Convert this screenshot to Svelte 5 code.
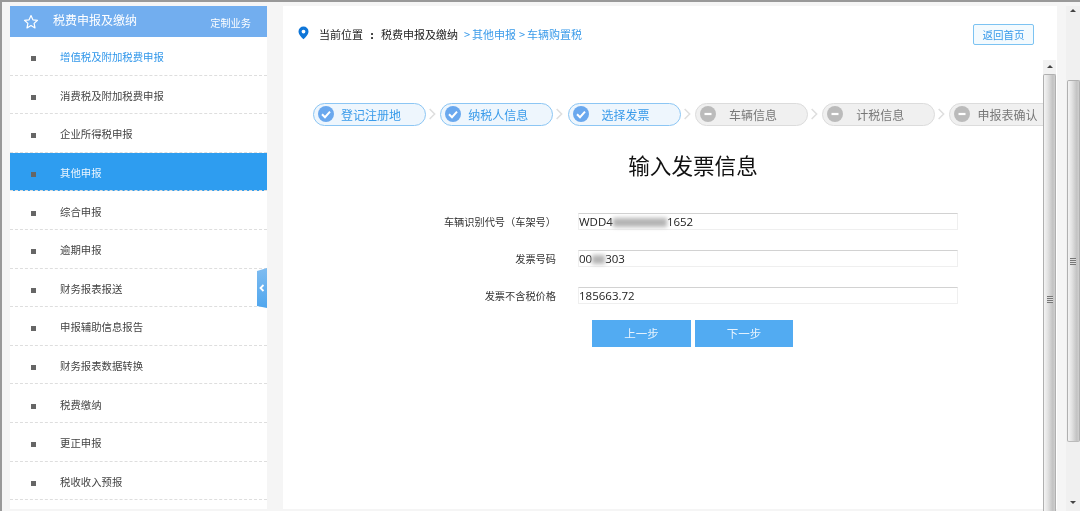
<script>
  const menu = ['增值税及附加税费申报','消费税及附加税费申报','企业所得税申报','其他申报','综合申报','逾期申报','财务报表报送','申报辅助信息报告','财务报表数据转换','税费缴纳','更正申报','税收收入预报'];
  const steps = [
    { label: '登记注册地', done: true },
    { label: '纳税人信息', done: true },
    { label: '选择发票', done: true },
    { label: '车辆信息', done: false },
    { label: '计税信息', done: false },
    { label: '申报表确认', done: false }
  ];
</script>

<div class="page">
  <aside class="sidebar">
    <div class="side-head">
      <svg class="star" width="16" height="16" viewBox="0 0 16 16"><path d="M8 1.600l1.900 4.200 4.600.5-3.400 3.100.9 4.500L8 11.600l-4 2.300.9-4.500L1.500 6.300l4.600-.5z" fill="none" stroke="#fff" stroke-width="1.200" stroke-linejoin="round"/></svg>
      <span class="side-title">税费申报及缴纳</span>
      <span class="side-custom">定制业务</span>
    </div>
    <ul class="menu">
      {#each menu as item, i}
        <li class:first={i === 0} class:active={i === 3}><i class="bullet"></i><span>{item}</span></li>
      {/each}
    </ul>
    <div class="toggle">
      <svg width="6" height="8" viewBox="0 0 6 8"><path d="M4.500 1L1.500 4l3 3" fill="none" stroke="#fff" stroke-width="1.800"/></svg>
    </div>
  </aside>

  <main class="main">
    <header class="crumbs">
      <svg class="pin" width="11" height="14" viewBox="0 0 11 14"><path fill-rule="evenodd" d="M5.500.5a5 5 0 0 1 5 5c0 3-3 5.800-5 7.800-2-2-5-4.800-5-7.800a5 5 0 0 1 5-5zm0 3.200a1.900 1.900 0 1 0 0 3.800 1.900 1.900 0 0 0 0-3.800z" fill="#0f76d8"/></svg>
      <span class="here">当前位置</span>
      <span class="colon">:</span>
      <span class="here">税费申报及缴纳</span>
      <span class="link first-link"><b>&gt;</b>其他申报</span>
      <span class="link"><b>&gt;</b>车辆购置税</span>
      <button class="home">返回首页</button>
    </header>

    <div class="body">
      <section class="content">
        <div class="steps">
          {#each steps as s, i}
            {#if i > 0}
              <svg class="chev" width="14" height="12" viewBox="0 0 14 12"><path d="M3.500 1l5 5-5 5" fill="none" stroke="#dedede" stroke-width="1.500"/></svg>
            {/if}
            <div class="step" class:done={s.done}>
              <span class="dot">
                {#if s.done}
                  <svg width="16" height="16" viewBox="0 0 16 16"><path d="M4 8.200l3 3 5-5.500" fill="none" stroke="#fff" stroke-width="2"/></svg>
                {:else}
                  <svg width="16" height="16" viewBox="0 0 16 16"><path d="M4.500 8h7" fill="none" stroke="#fff" stroke-width="2.200"/></svg>
                {/if}
              </span>
              <span class="step-label">{s.label}</span>
            </div>
          {/each}
        </div>

        <h1>输入发票信息</h1>

        <div class="form">
          <div class="row">
            <span class="label">车辆识别代号（车架号）</span>
            <div class="field">WDD4<i class="mask vin"></i>1652</div>
          </div>
          <div class="row">
            <span class="label">发票号码</span>
            <div class="field">00<i class="mask num"></i>303</div>
          </div>
          <div class="row">
            <span class="label">发票不含税价格</span>
            <div class="field">185663.72</div>
          </div>
        </div>

        <div class="actions">
          <button>上一步</button>
          <button>下一步</button>
        </div>
      </section>

      <div class="bar inner">
        <span class="arrow up"></span>
        <div class="thumb"><i class="grip"></i></div>
      </div>
    </div>
  </main>

  <div class="bar outer">
    <span class="arrow up"></span>
    <div class="thumb"><i class="grip"></i></div>
    <span class="arrow down"></span>
  </div>
</div>

<style>
  :global(body) {
    margin: 0;
    background: #f5f5f5;
  }
  .page {
    display: flex;
    box-sizing: border-box;
    width: 1080px;
    height: 511px;
    padding: 4px 0 2px 10px;
    position: relative;
    overflow: hidden;
    background: #f5f5f5;
    font-family: "Noto Sans CJK SC", "Liberation Sans", sans-serif;
    border-top: 2px solid #999;
    filter: blur(0.3px);
  }
  .page::before {
    content: "";
    position: absolute;
    left: 0;
    top: 0;
    bottom: 0;
    width: 2px;
    background: #999;
  }

  .sidebar {
    position: relative;
    width: 257px;
    flex: none;
    background: #fff;
  }
  .side-head {
    height: 31px;
    background: #72aeef;
    color: #fff;
    display: flex;
    align-items: center;
    box-sizing: border-box;
    padding: 0 16px 4px 13px;
  }
  .star { flex: none; margin-top: 4px; }
  .side-title {
    margin-left: 14px;
    font-size: 12px;
    white-space: nowrap;
  }
  .side-custom {
    margin-left: auto;
    font-size: 10.200px;
    padding-top: 5px;
  }
  .menu {
    list-style: none;
    margin: 0;
    padding: 0;
  }
  .menu li {
    box-sizing: border-box;
    height: 38.600px;
    display: flex;
    align-items: center;
    border-bottom: 1px dashed #dedede;
    color: #444;
    font-size: 10.400px;
    padding: 2px 0 0 21px;
  }
  .menu li.first { color: #2f96ea; }
  .menu li.active {
    background: #2e9df0;
    color: #eaf5fe;
  }
  .bullet {
    width: 5px;
    height: 5px;
    background: #666;
    margin: 4px 24px 0 0;
    flex: none;
  }
  .toggle {
    position: absolute;
    right: 0;
    top: 262px;
    width: 10px;
    height: 40px;
    background: linear-gradient(#7fbcf0, #4fa6ee);
    clip-path: polygon(0 3px, 100% 0, 100% 100%, 0 calc(100% - 2px));
    display: flex;
    align-items: center;
    justify-content: center;
  }

  .main {
    flex: none;
    width: 774px;
    margin-left: 16px;
    background: #fff;
    display: flex;
    flex-direction: column;
  }
  .crumbs {
    height: 54px;
    flex: none;
    box-sizing: border-box;
    display: flex;
    align-items: flex-start;
    padding: 20px 23px 0 15px;
    font-size: 11px;
    line-height: 16px;
    color: #222;
    white-space: nowrap;
  }
  .pin { margin-right: 10px; flex: none; }
  .colon {
    width: 18px;
    text-align: center;
    font-weight: 700;
  }
  .link {
    color: #3a9bea;
    margin-left: 3px;
  }
  .first-link { margin-left: 6px; }
  .link b {
    display: inline-block;
    width: 8px;
    font-weight: 400;
  }
  .home {
    margin: -2px 0 0 auto;
    width: 61px;
    height: 21px;
    border: 1px solid #7cc3f2;
    border-radius: 2px;
    background: #f3fafe;
    color: #3a9bea;
    font: inherit;
    font-size: 10.500px;
    padding: 0;
  }

  .body {
    flex: 1;
    display: flex;
    min-height: 0;
  }
  .content {
    width: 760px;
    flex: none;
    overflow: hidden;
    padding-top: 43px;
    box-sizing: border-box;
  }
  .steps {
    display: flex;
    align-items: center;
    padding-left: 30px;
    width: 860px;
  }
  .chev { flex: none; width: 14.300px; }
  .step {
    flex: none;
    box-sizing: border-box;
    width: 113px;
    height: 22.500px;
    border: 1px solid #dcdcdc;
    border-radius: 11.500px;
    background: #f0f0f0;
    display: flex;
    align-items: center;
    padding-left: 4px;
    color: #777;
    font-size: 12px;
  }
  .step.done {
    border-color: #8cc6f4;
    background: #eef6fd;
    color: #3a9bea;
  }
  .dot {
    width: 16px;
    height: 16px;
    border-radius: 50%;
    background: #bbb;
    flex: none;
    display: flex;
  }
  .step.done .dot { background: #6aa8ee; }
  .step-label {
    flex: 1;
    text-align: center;
    padding-right: 17px;
    white-space: nowrap;
  }

  h1 {
    margin: 22px 0 0;
    height: 34px;
    font-size: 21.600px;
    line-height: 34px;
    font-weight: 400;
    color: #111;
    text-align: center;
    padding-left: 60px;
  }

  .form {
    margin-top: 31px;
    display: flex;
    flex-direction: column;
    gap: 20px;
  }
  .row {
    display: flex;
    align-items: center;
  }
  .label {
    width: 273px;
    text-align: right;
    font-size: 10.200px;
    color: #333;
    white-space: nowrap;
  }
  .field {
    margin-left: 22px;
    box-sizing: border-box;
    width: 380px;
    height: 17px;
    line-height: 15px;
    border: 1px solid #efefef;
    border-top: 1px solid #d2d2d2;
    font-family: "Open Sans", sans-serif;
    font-size: 11.500px;
    color: #222;
    white-space: nowrap;
  }
  .mask {
    display: inline-block;
    height: 9px;
    vertical-align: -1px;
    background: #b4b4b4;
    filter: blur(2px);
  }
  .mask.vin { width: 54px; }
  .mask.num { width: 13px; }

  .actions {
    margin-top: 16px;
    padding-left: 309px;
    display: flex;
    gap: 4px;
  }
  .actions button {
    width: 99px;
    height: 27px;
    border: 0;
    padding: 0;
    background: #52abf2;
    color: #e8f4fe;
    font: inherit;
    font-size: 11.500px;
  }
  .actions button + button { width: 98px; }

  .bar {
    flex: none;
    box-sizing: border-box;
    display: flex;
    flex-direction: column;
    align-items: center;
    position: relative;
    background: #f0f0f0;
  }
  .bar.inner {
    width: 13px;
    padding-top: 14px;
    background: #f2f2f2;
  }
  .bar.outer {
    width: 14px;
    margin: 0 0 -2px 9px;
    padding-top: 74px;
  }
  .thumb {
    width: 13px;
    box-sizing: border-box;
    border: 1px solid #b0b0b0;
    border-bottom: 0;
    border-radius: 2px 2px 0 0;
    background: linear-gradient(90deg, #f4f4f4 0%, #e2e2e2 35%, #c2c2c2 80%, #cfcfcf 100%);
    display: flex;
    align-items: center;
    justify-content: center;
  }
  .bar.inner .thumb { height: 450px; flex: none; }
  .bar.outer .thumb {
    height: 362px;
    flex: none;
    border-bottom: 1px solid #bbb;
    border-radius: 2px;
  }
  .grip {
    width: 6px;
    height: 7px;
    background: repeating-linear-gradient(#777 0 1px, #ddd 1px 2px);
  }
  .arrow {
    position: absolute;
    left: 50%;
    margin-left: -3px;
    width: 0;
    height: 0;
    border-left: 3px solid transparent;
    border-right: 3px solid transparent;
  }
  .arrow.up { border-bottom: 3px solid #444; }
  .arrow.down { border-top: 3px solid #444; bottom: 7px; }
  .bar.inner .arrow.up { top: 5px; }
  .bar.outer .arrow.up { top: 3px; }
</style>
